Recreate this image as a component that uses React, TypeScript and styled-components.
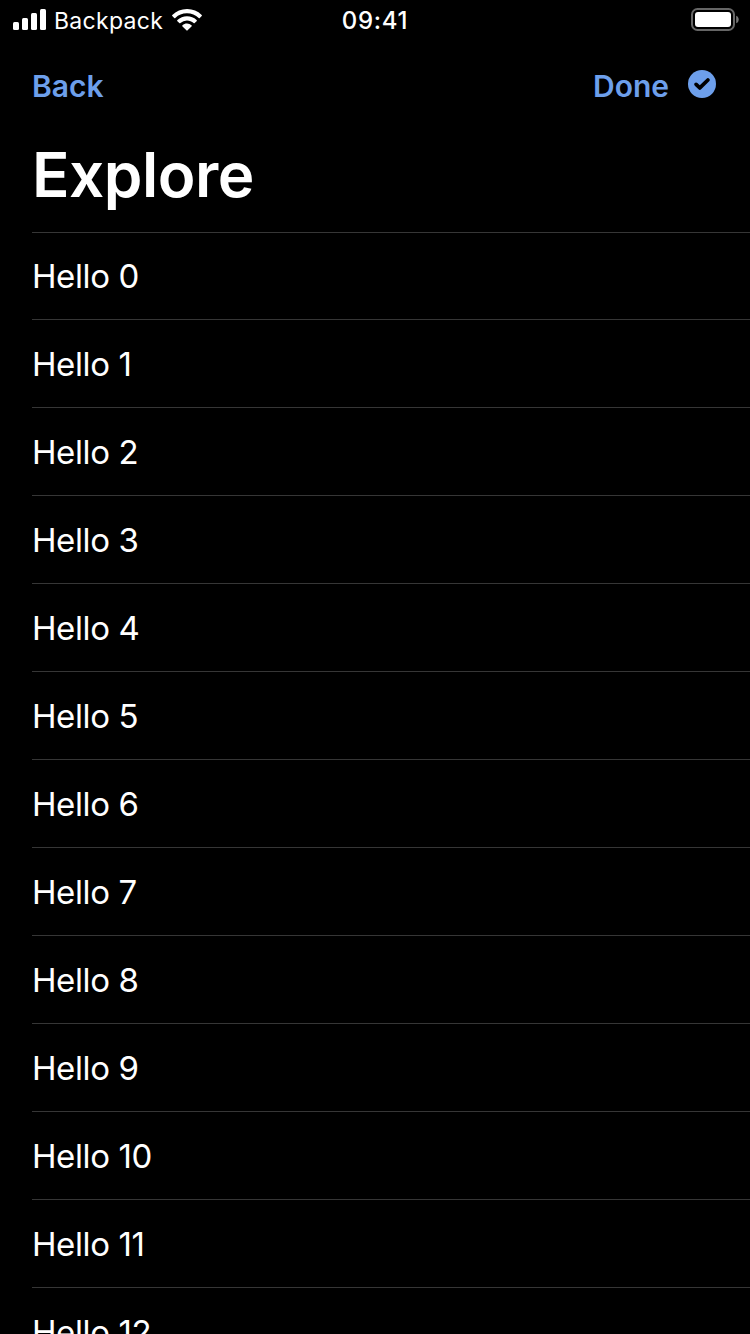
import React from "react";
import styled, { createGlobalStyle } from "styled-components";

const GlobalStyle = createGlobalStyle`
  * { box-sizing: border-box; }
  html, body { margin: 0; background: #000; }
  body { overflow: hidden; font-family: Inter, "Liberation Sans", sans-serif; color: #fff; }
`;

const Screen = styled.main`
  display: flex;
  flex-direction: column;
  width: 750px;
  height: 1334px;
  overflow: hidden;
  background: #000;
`;

const StatusBar = styled.header`
  display: grid;
  grid-template-columns: 1fr auto 1fr;
  align-items: center;
  flex: none;
  height: 40px;
  padding: 0 11px 0 13px;
`;

const Carrier = styled.div`
  display: flex;
  align-items: center;
`;

const CarrierName = styled.span`
  margin: 2px 9px 0 7px;
  font-size: 23px;
  line-height: 28px;
  letter-spacing: 0.3px;
`;

const Clock = styled.time`
  margin-left: -2px;
  padding-top: 2px;
  font-size: 24px;
  font-weight: 500;
  line-height: 28px;
  letter-spacing: 0.7px;
`;

const BatterySlot = styled.div`
  display: flex;
  justify-content: flex-end;
`;

const NavBar = styled.nav`
  display: flex;
  align-items: center;
  justify-content: space-between;
  flex: none;
  height: 88px;
  padding: 4px 34px 0 32px;
`;

const NavButton = styled.button`
  display: flex;
  align-items: center;
  gap: 19px;
  padding: 0;
  border: 0;
  background: none;
  color: #6d9feb;
  font: 600 30px/36px Inter, "Liberation Sans", sans-serif;
`;

const NavLabel = styled.span`
  letter-spacing: 0;
`;

const CheckIcon = styled.svg`
  display: block;
  margin-bottom: 4px;
`;

const Title = styled.h1`
  flex: none;
  height: 104px;
  margin: 0;
  padding: 5px 0 0 32px;
  font-size: 62px;
  font-weight: 600;
  line-height: 84px;
  letter-spacing: -0.5px;
`;

const List = styled.ul`
  margin: 0;
  padding: 0 0 0 32px;
  list-style: none;
`;

const Row = styled.li`
  height: 88px;
  padding-top: 23px;
  border-top: 1px solid #363636;
  font-size: 33px;
  line-height: 42px;
  letter-spacing: -0.4px;

  &:first-child {
    height: 87px;
    padding-top: 22px;
  }
`;

const items = Array.from({ length: 13 }, (_, i) => `Hello ${i}`);

const Signal = () => (
  <svg width="34" height="22" viewBox="0 0 34 22" fill="#fff">
    <rect x="0" y="13" width="6" height="8" rx="1.5" />
    <rect x="9" y="9" width="6" height="12" rx="1.5" />
    <rect x="18" y="4" width="6" height="17" rx="1.5" />
    <rect x="27" y="0" width="6" height="21" rx="1.5" />
  </svg>
);

const Wifi = () => (
  <svg width="30" height="22" viewBox="0 0 30 22" fill="#fff">
    <path d="M15 0C9.300 0 4.100 2.200.3 5.900a.8.8 0 0 0 0 1.100l1.900 1.900a.8.8 0 0 0 1.100 0A16.700 16.700 0 0 1 15 4.300c4.500 0 8.600 1.700 11.700 4.600a.8.8 0 0 0 1.100 0L29.700 7a.8.8 0 0 0 0-1.100A21 21 0 0 0 15 0Z" />
    <path d="M15 7.300c-3.700 0-7 1.400-9.600 3.700a.8.8 0 0 0 0 1.200l1.900 1.900a.8.8 0 0 0 1.100 0A9.800 9.800 0 0 1 15 11.600c2.500 0 4.800.9 6.600 2.500a.8.8 0 0 0 1.100 0l1.900-1.900a.8.8 0 0 0 0-1.200A14.300 14.300 0 0 0 15 7.300Z" />
    <path d="M15 14.600c-1.700 0-3.300.6-4.500 1.600a.8.8 0 0 0 0 1.200l3.900 3.900a.8.8 0 0 0 1.200 0l3.900-3.900a.8.8 0 0 0 0-1.200 7 7 0 0 0-4.500-1.600Z" />
  </svg>
);

const Battery = () => (
  <svg width="48" height="24" viewBox="0 0 48 24">
    <rect x="1" y="1" width="42" height="21" rx="5.500" fill="none" stroke="#666" strokeWidth="2" />
    <rect x="4" y="4" width="36" height="15" rx="3" fill="#fff" />
    <path d="M45.200 7.700c1.500.5 2.500 2 2.500 3.800s-1 3.300-2.500 3.800Z" fill="#777" />
  </svg>
);

export default function App() {
  return (
    <>
      <GlobalStyle />
      <Screen>
        <StatusBar>
          <Carrier>
            <Signal />
            <CarrierName>Backpack</CarrierName>
            <Wifi />
          </Carrier>
          <Clock>09:41</Clock>
          <BatterySlot>
            <Battery />
          </BatterySlot>
        </StatusBar>
        <NavBar>
          <NavButton>
            <NavLabel>Back</NavLabel>
          </NavButton>
          <NavButton>
            <NavLabel>Done</NavLabel>
            <CheckIcon width="28" height="28" viewBox="0 0 28 28">
              <circle cx="14" cy="14" r="14" fill="#6d9feb" />
              <path d="M8.100 14.400l3.700 3.500 8.100-7.900" fill="none" stroke="#000" strokeWidth="3.800" strokeLinecap="round" strokeLinejoin="round" />
            </CheckIcon>
          </NavButton>
        </NavBar>
        <Title>Explore</Title>
        <List>
          {items.map((label) => (
            <Row key={label}>{label}</Row>
          ))}
        </List>
      </Screen>
    </>
  );
}
